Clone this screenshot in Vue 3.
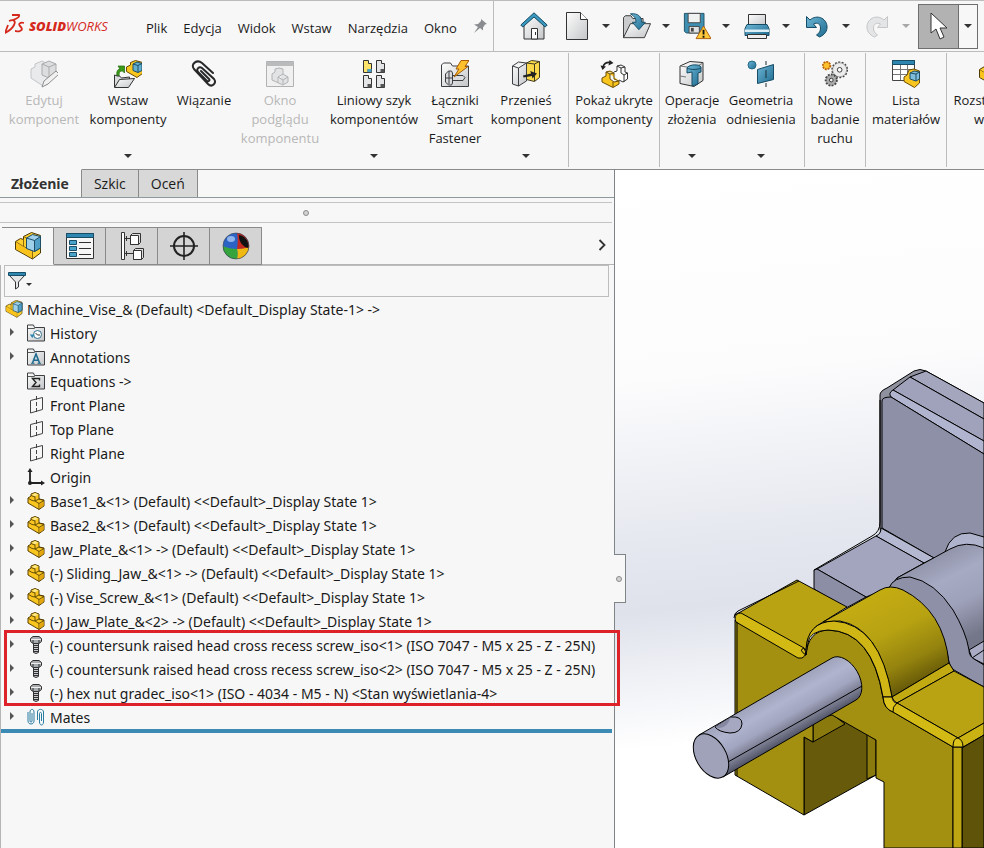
<script setup>
import { ref } from 'vue'

const menuItems = ['Plik', 'Edycja', 'Widok', 'Wstaw', 'Narzędzia', 'Okno']

const quickTools = [
  { id: 'new', label: 'Nowy' },
  { id: 'open', label: 'Otwórz' },
  { id: 'save', label: 'Zapisz' },
  { id: 'print', label: 'Drukuj' },
  { id: 'undo', label: 'Cofnij' },
  { id: 'redo', label: 'Ponów', disabled: true }
]

const ribbonGroups = [
  [
    { icon: 'edit-comp', lines: ['Edytuj', 'komponent'], size: 'lg', disabled: true },
    { icon: 'insert-comp', lines: ['Wstaw', 'komponenty'], size: 'lg', menu: true },
    { icon: 'clip', lines: ['Wiązanie'], size: 'md' },
    { icon: 'preview', lines: ['Okno', 'podglądu', 'komponentu'], size: 'lg', disabled: true },
    { icon: 'pattern', lines: ['Liniowy szyk', 'komponentów'], size: 'xl', menu: true },
    { icon: 'fastener', lines: ['Łączniki', 'Smart', 'Fastener'], size: 'sm' },
    { icon: 'move', lines: ['Przenieś', 'komponent'], size: 'lg', menu: true }
  ],
  [{ icon: 'show-hidden', lines: ['Pokaż ukryte', 'komponenty'], size: 'lg' }],
  [
    { icon: 'features', lines: ['Operacje', 'złożenia'], size: 'sm', menu: true },
    { icon: 'geometry', lines: ['Geometria', 'odniesienia'], size: 'lg', menu: true }
  ],
  [{ icon: 'motion', lines: ['Nowe', 'badanie', 'ruchu'], size: 'xs' }],
  [{ icon: 'bom', lines: ['Lista', 'materiałów'], size: 'ml' }],
  [{ icon: 'asm', lines: ['Rozstrzelony', 'widok'], size: 'lg' }]
]

const tabs = ['Złożenie', 'Szkic', 'Oceń']
const activeTab = ref('Złożenie')

const managerTabs = [
  { id: 'asm', label: 'Drzewo operacji' },
  { id: 'props', label: 'Właściwości' },
  { id: 'config', label: 'Konfiguracje' },
  { id: 'target', label: 'DimXpert' },
  { id: 'sphere', label: 'Wygląd' }
]
const activeManager = ref('asm')

const treeItems = [
  { icon: 'history', text: 'History', expand: true },
  { icon: 'annot', text: 'Annotations', expand: true },
  { icon: 'equations', text: 'Equations ->' },
  { icon: 'plane', text: 'Front Plane' },
  { icon: 'plane', text: 'Top Plane' },
  { icon: 'plane', text: 'Right Plane' },
  { icon: 'origin', text: 'Origin' },
  { icon: 'part', text: 'Base1_&<1> (Default) <<Default>_Display State 1>', expand: true },
  { icon: 'part', text: 'Base2_&<1> (Default) <<Default>_Display State 1>', expand: true },
  { icon: 'part', text: 'Jaw_Plate_&<1> -> (Default) <<Default>_Display State 1>', expand: true },
  { icon: 'part', text: '(-) Sliding_Jaw_&<1> -> (Default) <<Default>_Display State 1>', expand: true },
  { icon: 'part', text: '(-) Vise_Screw_&<1> (Default) <<Default>_Display State 1>', expand: true },
  { icon: 'part', text: '(-) Jaw_Plate_&<2> -> (Default) <<Default>_Display State 1>', expand: true }
]
const toolboxItems = [
  { icon: 'bolt', text: '(-) countersunk raised head cross recess screw_iso<1> (ISO 7047 - M5 x 25 - Z - 25N)', expand: true },
  { icon: 'bolt', text: '(-) countersunk raised head cross recess screw_iso<2> (ISO 7047 - M5 x 25 - Z - 25N)', expand: true },
  { icon: 'bolt', text: '(-) hex nut gradec_iso<1> (ISO - 4034 - M5 - N) <Stan wyświetlania-4>', expand: true }
]
const mateItems = [{ icon: 'mates', text: 'Mates', expand: true }]

const treeGroups = [
  { id: 'features', items: treeItems },
  { id: 'toolbox', items: toolboxItems, marked: true },
  { id: 'mates', items: mateItems }
]

const filterText = ref('')
</script>

<template>
  <div class="app">
    <!-- icon symbols -->
    <svg class="defs" width="0" height="0" aria-hidden="true">
      <defs>
        <linearGradient id="g-blue" x1="0" y1="0" x2="1" y2="1">
          <stop offset="0" stop-color="#6db6d6" /><stop offset="1" stop-color="#1f6c90" />
        </linearGradient>
        <linearGradient id="g-gray" x1="0" y1="0" x2="1" y2="1">
          <stop offset="0" stop-color="#fdfdfd" /><stop offset="1" stop-color="#c4c6c8" />
        </linearGradient>
        <symbol id="asm" viewBox="0 0 28 28">
          <path d="M1.500 9.500l5-3 3 1V4.500l8-4 9 3V21l-8 6L1.500 17.500z" fill="#ffd02e" stroke="#4e3a06" stroke-linejoin="round" />
          <path d="M1.500 9.500l8 5V7.500M9.500 14.500l9 4.500v8M9.500 4.500l3 1.500" fill="none" stroke="#8c6a10" />
          <path d="M2 10.500l7 4.500 9 4.500V26L2 17z" fill="#f9c31c" />
          <path d="M12.500 6l6-3.500 8 2v11.500l-6 3.500-8-3z" fill="#9fd0ea" stroke="#1e4e66" stroke-linejoin="round" />
          <path d="M20.500 8.500l6-4v11.500l-6 3.500z" fill="#4f9fc6" stroke="#1e4e66" stroke-linejoin="round" />
          <path d="M12.500 6l8 2.500" fill="none" stroke="#1e4e66" />
        </symbol>
        <symbol id="part" viewBox="0 0 18 18">
          <path d="M1 6l3-2 0-2 4-1.500L12 2v5l5 1v6l-5 3.500L1 11z" fill="#f9c51f" stroke="#5a4307" stroke-linejoin="round" />
          <path d="M4.500 3L8 4.500 11.500 2.500 8 1z" fill="#ffe681" />
          <path d="M8 4.500V9l4 2.500 5-3-5-1.500-4 2M12 11.500v6M4 3.500L8 5M1 6l4 2.500 3 .5" fill="none" stroke="#5a4307" stroke-width=".9" />
          <path d="M12.500 12l4-2.500v4.300l-4 2.700z" fill="#e5a70f" />
        </symbol>
        <symbol id="folder" viewBox="0 0 18 18">
          <path d="M.5 17V1h6l1 2.500h10V17z" fill="url(#g-gray)" stroke="#3c3f42" />
          <path d="M1 4.500h6.500l1-1" fill="none" stroke="#55585b" />
        </symbol>
        <symbol id="history" viewBox="0 0 18 18">
          <use href="#folder" />
          <circle cx="10.500" cy="10.500" r="4" fill="#fff" stroke="#2f6f8f" />
          <path d="M8.500 9l2 2h2.500" fill="none" stroke="#333" />
          <path d="M2.800 10.500h5L5.300 14z" fill="#2d87b0" />
        </symbol>
        <symbol id="annot" viewBox="0 0 18 18">
          <use href="#folder" />
          <path d="M5.500 15l3.500-9 3.500 9M6.500 12.200h5" fill="none" stroke="#1f6c90" stroke-width="1.600" />
          <path d="M4 15.300h3.500M10.500 15.300H14" stroke="#1f6c90" />
        </symbol>
        <symbol id="equations" viewBox="0 0 18 18">
          <use href="#folder" />
          <path d="M12.500 8.500V6.500h-7L9 10.500l-3.500 4h7v-2" fill="none" stroke="#222" stroke-width="1.400" />
        </symbol>
        <symbol id="plane" viewBox="0 0 18 18">
          <path d="M3.500 4.500l12-3v12l-12 3.500z" fill="none" stroke="#444" />
          <path d="M9.500 0v17.500" stroke="#444" stroke-dasharray="4 2" />
        </symbol>
        <symbol id="origin" viewBox="0 0 18 18">
          <path d="M3 2v13h13" fill="none" stroke="#222" stroke-width="1.800" />
          <path d="M.5 4L3 0l2.500 4zM14 12.500L18 15l-4 2.500z" fill="#222" />
          <circle cx="3" cy="15" r="2" fill="#222" />
        </symbol>
        <symbol id="bolt" viewBox="0 0 18 18">
          <path d="M3.500 2.500L6 .5h6l2.500 2v3l-2.500 2H6l-2.500-2z" fill="#a9acaf" stroke="#2e3032" />
          <path d="M4 3.500h10" stroke="#eee" />
          <path d="M6.500 7.500h5v9l-2.500 1-2.500-1z" fill="#c9cbcd" stroke="#2e3032" />
          <path d="M6.500 9.500h5M6.500 11.500h5M6.500 13.500h5M6.500 15.500h5M6 4v3M12 4v3" stroke="#2e3032" />
        </symbol>
        <symbol id="mates" viewBox="0 0 18 18">
          <path d="M1 4v9c0 4 6 4 6 0V4C7 .5 3 .5 3 4v9c0 1.500 2 1.500 2 0V5" fill="none" stroke="#2a7ca3" />
          <path d="M10.500 12V4c0-3.500 6-3.500 6 0v10c0 4-4 4-4 0V5.500c0-1.500 2-1.500 2 0V13" fill="none" stroke="#2a7ca3" />
        </symbol>
        <symbol id="edit-comp" viewBox="0 0 28 28">
          <g stroke="#c3c5c7" stroke-linejoin="round">
            <path d="M1 9l4-2V4l7-3 6 3v20l-5 2L1 18z" fill="#e9eaeb" />
            <path d="M12 4l7-3 7 3v11l-7 3-7-3z" fill="#dcdddf" stroke="#a9abad" />
            <path d="M12 4l7 3v11M19 7l7-3" fill="none" stroke="#a9abad" />
            <path d="M12 27l2-6L26 11l3 3-11 10z" fill="#f1f1f1" stroke="#8d8f91" />
          </g>
        </symbol>
        <symbol id="insert-comp" viewBox="0 0 28 28">
          <path d="M12.500 7l4-2V2.500l5-2 7 2v11l-5.500 4-10.500-6z" fill="#f9c51f" stroke="#6b4d05" stroke-linejoin="round" />
          <path d="M19 4l4-2 5 1.500v7l-4 2-5-2zM19 4l5 1.500v7M24 5.500l4-2" fill="#62afd2" stroke="#1e4e66" />
          <path d="M3 17c-1-6 1-8 3-8L4 6h6.500v7l-2-2c-3 0-4 2-3 6z" fill="#3c9a1a" stroke="#1e6a08" stroke-width=".7" />
          <path d="M.5 27V15l3 1h2l2 2 8-1v3" fill="#d8dadb" stroke="#333" />
          <path d="M.5 27.500l5-8 15-1-6 9z" fill="url(#g-gray)" stroke="#333" stroke-linejoin="round" />
        </symbol>
        <symbol id="clip" viewBox="0 0 28 28">
          <path d="M23 13L12 3C7-1 0 4 4 9l14 15c4 4 9-1 6-5L12 8C9 6 6 9 8 12l9 9c2 1 3-1 2-2l-8-8" fill="none" stroke="#26282a" stroke-width="2" stroke-linecap="round" />
        </symbol>
        <symbol id="preview" viewBox="0 0 28 28">
          <path d="M.5 1.500h27v25H.5z" fill="#f0f0f0" stroke="#b0b2b4" />
          <path d="M.5 2h27v4H.5z" fill="#b9bbbd" />
          <path d="M6 14l3-2v-3l4-1 4 1v5l5 3v5l-5 3-11-5zM17 14l-5 3v5M12 17l5 3v4M17 20l5-3" fill="#e2e3e4" stroke="#b0b2b4" stroke-linejoin="round" />
        </symbol>
        <symbol id="lshape" viewBox="0 0 10 13">
          <path d="M.5.500h5v3h3v9h-8z" stroke="#333" />
          <path d="M4.500 9h4v3.500h-4z" fill="#555" />
        </symbol>
        <symbol id="pattern" viewBox="0 0 28 28">
          <use href="#lshape" x="3" y="0" width="10" height="13" fill="#ffe36b" />
          <path d="M7.500 9h4v3h-4z" fill="#4aa3c8" />
          <use href="#lshape" x="16" y="0" width="10" height="13" fill="#e4e5e6" />
          <use href="#lshape" x="3" y="15" width="10" height="13" fill="#e4e5e6" />
          <use href="#lshape" x="16" y="15" width="10" height="13" fill="#e4e5e6" />
        </symbol>
        <symbol id="fastener" viewBox="0 0 28 28">
          <path d="M.5 26.500V5l2-2h7l2 3h16v20.500z" fill="url(#g-gray)" stroke="#3c3f42" />
          <path d="M4.500 14l3-3h3l1 2v10l-1 2h-3l-3-3zM12 15.500h10l2 2-2 3H12M8 11v13M5 18h7" fill="#dadbdd" stroke="#3c3f42" />
          <path d="M20 .500h8l-4 6h3L13 17l5-8h-3z" fill="#ffc02e" stroke="#a55c05" stroke-linejoin="round" />
        </symbol>
        <symbol id="move" viewBox="0 0 28 28">
          <path d="M14.500 3l5-2.500 8 1v16l-5 4-8-2z" fill="#f9d84a" stroke="#3f3a20" stroke-linejoin="round" />
          <path d="M14.500 3l8 1 5-2.500M22.500 4v17" fill="none" stroke="#3f3a20" />
          <path d="M.5 6l6-4 8 1v18l-8 5-6-2zM.5 6l6 2 8-5M6.500 8v18" fill="url(#g-gray)" stroke="#3c3f42" stroke-linejoin="round" />
          <path d="M11 15.500l8-2-.7-2.500 6.700 2.500-4.500 5-.6-2.500L11.500 17.500z" fill="#222" />
        </symbol>
        <symbol id="show-hidden" viewBox="0 0 28 28">
          <path d="M14 12l3-1V6l4-1 4 2v5l2.500 1v6l-4.500 3-4-2M17 6l4 2 4-1M21 8v5l3 2 3.500-2M24 15v7" fill="#fff" stroke="#333" stroke-linejoin="round" />
          <path d="M2 18l4-2v-4l4-1 4 2v6l5 2v3l-6 3.500L2 22zM6 12l4 2 4-1M10 14v5l4 3 5-1M13 22v5" fill="#f9c51f" stroke="#6b4d05" stroke-linejoin="round" />
          <path d="M3 7C4 3 7 2 11 2.500" fill="none" stroke="#222" stroke-width="1.600" />
          <path d="M.5 5.500L6 6.500 2.500 10zM9.500 0l4 3-5 2.500z" fill="#222" />
        </symbol>
        <symbol id="features" viewBox="0 0 28 28">
          <path d="M2 6l10-4.500 13 1v18l-9 6-14-3z" fill="url(#g-gray)" stroke="#333" stroke-linejoin="round" />
          <path d="M2 6l14 2 9-5M2 16l6 1" fill="none" stroke="#777" />
          <path d="M9 8c2-4 13-4 14-1v5l-3 1v11l-6 2V12l-5 1z" fill="url(#g-blue)" stroke="#174d66" stroke-linejoin="round" />
          <path d="M9 8c4 2 10 2 14 0" fill="none" stroke="#174d66" />
        </symbol>
        <symbol id="geometry" viewBox="0 0 28 28">
          <circle cx="5" cy="5" r="4" fill="url(#g-blue)" stroke="#236a8a" />
          <path d="M10.500 9.500l16-5v15l-16 4z" fill="url(#g-blue)" stroke="#174d66" />
          <path d="M19 1v4M19 10v8M19 23v4" stroke="#1c2c34" />
        </symbol>
        <symbol id="motion" viewBox="0 0 30 28">
          <circle cx="6" cy="5" r="4" fill="#ffc02e" stroke="#b3610a" stroke-width="2" stroke-dasharray="2 1" />
          <circle cx="20" cy="9.500" r="8" fill="#ececed" stroke="#444" stroke-width="2" stroke-dasharray="2 1.600" />
          <circle cx="20" cy="9.500" r="7.500" fill="#ececed" stroke="#888" stroke-width=".7" />
          <circle cx="20" cy="9.500" r="2.500" fill="#fff" stroke="#333" />
          <circle cx="11" cy="20.500" r="6" fill="#aaacae" stroke="#444" stroke-width="2" stroke-dasharray="2 1.400" />
          <circle cx="11" cy="20.500" r="2" fill="#eee" stroke="#333" />
        </symbol>
        <symbol id="bom" viewBox="0 0 28 28">
          <path d="M.5.500h22v20H.5z" fill="#fff" stroke="#444" />
          <path d="M.5.500h22v4H.5z" fill="#2d87b0" stroke="#174d66" />
          <path d="M1 9.500h21M1 14.500h21M8.500 5v15M15.500 5v15" stroke="#777" />
          <path d="M12 17l3-2 2-5 5-1 5.500 2v12l-5 4.500-10.500-6z" fill="#f9c51f" stroke="#6b4d05" stroke-linejoin="round" />
          <path d="M18 13l4-2 5.500 1v7l-3.500 2-6-2zM18 13l6 1v7M24 14l3.500-2" fill="#7ebddc" stroke="#1e4e66" />
        </symbol>
        <symbol id="home" viewBox="0 0 28 28">
          <path d="M4 13L14 4l10 9v14H4z" fill="url(#g-gray)" stroke="#333" />
          <path d="M11.500 16.500h6V27h-6z" fill="#fff" stroke="#333" />
          <path d="M15.500 20v3" stroke="#333" />
          <path d="M.8 13L14 .8 27.200 13l-2 2L14 5 2.800 15z" fill="#3a98bf" stroke="#174d66" stroke-linejoin="round" />
        </symbol>
        <symbol id="new" viewBox="0 0 28 28">
          <path d="M3.500.500h14l7 7v20h-21z" fill="url(#g-gray)" stroke="#333" />
          <path d="M17.500.500v7h7" fill="#fff" stroke="#333" />
        </symbol>
        <symbol id="open" viewBox="0 0 30 28">
          <path d="M.5 26.500V5l2-2h6l2 3h11v6" fill="#c9cbcd" stroke="#333" />
          <path d="M.5 26.500L8 11.500h21.500L23 26.500z" fill="url(#g-gray)" stroke="#333" stroke-linejoin="round" />
          <path d="M8 1c8-1 12 3 12 9h4l-7 8-7-8h4c0-4-2-7-6-9z" fill="url(#g-blue)" stroke="#174d66" stroke-linejoin="round" />
        </symbol>
        <symbol id="save" viewBox="0 0 30 30">
          <path d="M1.500 1.500h21v21h-19l-2-2z" fill="#3e8fb2" stroke="#1c4f66" />
          <path d="M5.500 1.500h13v10h-13z" fill="#f0f1f1" stroke="#444" />
          <path d="M6.500 15.500h11v7h-11z" fill="#e0e1e2" stroke="#444" />
          <path d="M8.500 17h3v4h-3z" fill="#444" />
          <path d="M22 15l8 13.500H14z" fill="#ffc93c" stroke="#a85a06" stroke-linejoin="round" />
          <path d="M22 19v5M22 25.500v2" stroke="#111" stroke-width="2" />
        </symbol>
        <symbol id="print" viewBox="0 0 28 28">
          <path d="M5.500 2.500h17v12h-17z" fill="url(#g-gray)" stroke="#333" />
          <path d="M4 12.500h20l2 4v7H2v-7z" fill="url(#g-blue)" stroke="#174d66" />
          <path d="M2 17.500h24V20H2z" fill="#dceef6" />
          <path d="M4.500 22.500h19v4h-19z" fill="#eee" stroke="#333" />
        </symbol>
        <symbol id="undo" viewBox="0 0 28 28">
          <path d="M3.500 4.500v11h10l-3-3.500c4-2 7 0 7 4 0 3-1 5-4 7l3 2c5-2 8-6 7.500-11C23 6 14 2 7 8z" fill="url(#g-blue)" stroke="#174d66" stroke-linejoin="round" />
        </symbol>
        <symbol id="redo" viewBox="0 0 28 28">
          <path d="M24.500 4.500v11h-10l3-3.500c-4-2-7 0-7 4 0 3 1 5 4 7l-3 2c-5-2-8-6-7.500-11C5 6 14 2 21 8z" fill="#e4e5e6" stroke="#c4c6c8" stroke-linejoin="round" />
        </symbol>
        <symbol id="props" viewBox="0 0 28 28">
          <path d="M.5 1.500h27v25H.5z" fill="#f7f7f7" stroke="#333" />
          <path d="M.5 1.500h27v4H.5z" fill="#2d87b0" stroke="#174d66" />
          <path d="M3.500 8.500h7v4h-7zM3.500 14.500h7v4h-7zM3.500 20.500h7v4h-7z" fill="#4aa3c8" stroke="#174d66" />
          <path d="M13 10.500h12M13 16.500h12M13 22.500h12" stroke="#333" />
        </symbol>
        <symbol id="config" viewBox="0 0 28 28">
          <path d="M3.500.500h3v27h-3z" fill="#fff" stroke="#333" />
          <path d="M6.500 6.500h6M6.500 21.500h9M8.500 19v5M8.500 4v5" stroke="#333" />
          <path d="M12.500 3.500l2-2h8v9l-2 2h-8zM15.500 18.500l2-2h8v9l-2 2h-8z" fill="#ddd" stroke="#333" />
          <path d="M12.500 3.500h8v9h-8zM15.500 18.500h8v9h-8z" fill="#fff" stroke="#333" />
        </symbol>
        <symbol id="target" viewBox="0 0 28 28">
          <circle cx="14" cy="14" r="10" fill="none" stroke="#222" stroke-width="2" />
          <path d="M0 14h28M14 0v28" stroke="#222" stroke-width="1.600" />
        </symbol>
        <symbol id="sphere" viewBox="0 0 28 28">
          <circle cx="14" cy="14" r="13" fill="#2b63c4" />
          <path d="M1 14a13 13 0 0 0 14 13c1-4 1-7 0-10-5 0-10-1-14-3z" fill="#35a43c" />
          <path d="M15 27a13 13 0 0 0 12-12l-12 2c1 3 1 6 0 10z" fill="#f0b912" />
          <path d="M15 1a13 13 0 0 1 12 14c-3 1-8 2-12 2 1-6 1-11 0-16z" fill="#c22a22" />
          <path d="M17 3c6 1 10 6 9.500 13-6-1-10-7-9.500-13z" fill="#111" />
          <ellipse cx="9" cy="7" rx="4" ry="3" fill="#a9c8f5" opacity=".8" />
          <circle cx="14" cy="14" r="13" fill="none" stroke="#3a3f46" stroke-opacity=".6" />
        </symbol>
      </defs>
    </svg>

    <header class="titlebar">
      <div class="brand">
        <svg class="brand-mark" viewBox="0 0 20 20" aria-hidden="true">
          <path d="M7 1l7 0c1 2-3 4-6 5M4 7c5-2 7 0 5 4-2 4-5 6-9 8l3-8M19 9c-4-1-6 1-4 3s3 4 0 5c-2 1-4 0-5 0" fill="none" stroke="#d6291e" stroke-width="1.800" />
        </svg>
        <span class="brand-name"><b>SOLID</b>WORKS</span>
      </div>
      <nav class="menu">
        <a v-for="item in menuItems" :key="item" href="#">{{ item }}</a>
        <svg class="pin" viewBox="0 0 14 14" aria-hidden="true">
          <path d="M8 0l6 5-2 .500-2 3 0 3-3-2.500L1 14l4-6L1 5.500l4-.5 3-3z" fill="#8a8c8f" />
        </svg>
      </nav>
      <div class="quick">
        <button class="tool home" aria-label="Strona główna"><svg><use href="#home" /></svg></button>
        <div class="tool-list">
          <div v-for="tool in quickTools" :key="tool.id" class="split" :class="{ disabled: tool.disabled }">
            <button class="tool" :aria-label="tool.label"><svg><use :href="'#' + tool.id" /></svg></button>
            <button class="drop" :aria-label="tool.label + ' – opcje'"><i class="caret"></i></button>
          </div>
        </div>
        <div class="select-tool">
          <button class="cursor" aria-label="Wybierz">
            <svg viewBox="0 0 18 28">
              <path d="M1 1v20l5-4 4 10 4-2-4-9h7z" fill="#fff" stroke="#333" stroke-linejoin="round" />
            </svg>
          </button>
          <button class="cursor-drop" aria-label="Wybierz – opcje"><i class="caret"></i></button>
        </div>
      </div>
    </header>

    <div class="ribbon">
      <div v-for="(group, g) in ribbonGroups" :key="g" class="group">
        <button
          v-for="cmd in group"
          :key="cmd.icon"
          class="command"
          :class="[cmd.size, { disabled: cmd.disabled }]"
        >
          <svg class="command-icon"><use :href="'#' + cmd.icon" /></svg>
          <span v-for="line in cmd.lines" :key="line" class="line">{{ line }}</span>
          <i v-if="cmd.menu" class="caret"></i>
        </button>
      </div>
    </div>

    <main class="workspace">
      <section class="panel">
        <div class="tabs">
          <button
            v-for="tab in tabs"
            :key="tab"
            class="tab"
            :class="{ active: tab === activeTab }"
            @click="activeTab = tab"
          >{{ tab }}</button>
        </div>
        <div class="splitter"><i class="dot"></i></div>
        <div class="manager">
          <button
            v-for="tab in managerTabs"
            :key="tab.id"
            class="manager-tab"
            :class="{ active: tab.id === activeManager }"
            :aria-label="tab.label"
            @click="activeManager = tab.id"
          >
            <svg><use :href="'#' + tab.id" /></svg>
          </button>
          <button class="more" aria-label="Więcej">
            <svg viewBox="0 0 8 12"><path d="M1.500 1l5 5-5 5" fill="none" stroke="#333" stroke-width="1.800" /></svg>
          </button>
        </div>
        <div class="tree-box">
          <label class="filter">
            <svg class="funnel" viewBox="0 0 18 18" aria-hidden="true">
              <path d="M1 3l6.500 7v7l3-2V10L17 3z" fill="#e4e5e6" stroke="#333" stroke-linejoin="round" />
              <path d="M.5.500h17v3H.5z" fill="#2d87b0" stroke="#174d66" />
            </svg>
            <i class="caret small"></i>
            <input v-model="filterText" type="text" aria-label="Filtr">
          </label>
          <div class="root">
            <svg class="tree-icon"><use href="#asm" /></svg>
            <span>Machine_Vise_&amp; (Default) &lt;Default_Display State-1&gt; -&gt;</span>
          </div>
          <ul v-for="group in treeGroups" :key="group.id" class="tree" :class="{ marked: group.marked }">
            <li v-for="item in group.items" :key="item.text" class="node">
              <button v-if="item.expand" class="expander" aria-label="Rozwiń"></button>
              <span v-else class="no-expander"></span>
              <svg class="tree-icon"><use :href="'#' + item.icon" /></svg>
              <span>{{ item.text }}</span>
            </li>
          </ul>
          <div class="rollback"></div>
        </div>
      </section>

      <section class="viewport">
        <svg class="scene" viewBox="615 170 369 678" preserveAspectRatio="xMinYMin slice">
          <defs>
            <linearGradient id="bg" gradientUnits="userSpaceOnUse" x1="680" y1="170" x2="750" y2="848">
              <stop offset="0" stop-color="#fff" />
              <stop offset=".3" stop-color="#fcfcfd" />
              <stop offset=".42" stop-color="#f1f2f6" />
              <stop offset=".54" stop-color="#e5e8ef" />
              <stop offset=".64" stop-color="#dfe2eb" />
              <stop offset=".73" stop-color="#eef0f5" />
              <stop offset=".84" stop-color="#fff" />
            </linearGradient>
            <linearGradient id="shaft" gradientUnits="userSpaceOnUse" x1="765" y1="696" x2="789" y2="738">
              <stop offset="0" stop-color="#9ea2ba" />
              <stop offset=".3" stop-color="#b0b4ce" />
              <stop offset=".6" stop-color="#a2a5bf" />
              <stop offset=".85" stop-color="#77798d" />
              <stop offset="1" stop-color="#55576a" />
            </linearGradient>
            <linearGradient id="arch" gradientUnits="userSpaceOnUse" x1="862" y1="602" x2="905" y2="690">
              <stop offset="0" stop-color="#c3ab12" />
              <stop offset=".4" stop-color="#b7a212" />
              <stop offset=".75" stop-color="#94830e" />
              <stop offset="1" stop-color="#665908" />
            </linearGradient>
            <linearGradient id="drum" gradientUnits="userSpaceOnUse" x1="925" y1="560" x2="965" y2="640">
              <stop offset="0" stop-color="#9093a8" />
              <stop offset=".3" stop-color="#a6aac3" />
              <stop offset=".6" stop-color="#9ea1ba" />
              <stop offset="1" stop-color="#747689" />
            </linearGradient>
          </defs>
          <path d="M615 170h369v678H615z" fill="url(#bg)" />

          <!-- fixed jaw -->
          <g stroke="#000" stroke-linejoin="round">
            <path d="M880 395Q880 391 887 388L914 371Q920 368 926 371L984 403V540H882L880 528z" fill="#8f919f" />
            <path d="M910 377L926 371L984 403V419z" fill="#a3a6bd" />
            <path d="M893 390L910 377L984 419V441z" fill="#9fa2ba" />
            <path d="M891 397Q888 393 893 390L984 441V454z" fill="#b1b4ce" />
            <path d="M882 401Q882 397 891 397L984 454V590L934 558L882 528z" fill="#8e90a7" />
            <path d="M881 528L934 558L924 563L876 536Q881 534 881 528z" fill="#b4b8d0" />
            <path d="M817 569L876 536L924 563L897 578L889 588L866 597z" fill="#a2a5bd" />
            <path d="M814 570L817 569L866 597L846 608L814 589z" fill="#8c8ea6" />
            <path d="M814 570L872 536Q880 532 880 522V400" fill="none" />
          </g>

          <!-- drum and collar -->
          <g stroke="#000" stroke-linejoin="round">
            <path d="M945 552Q951 532 970 533L984 537V560H945z" fill="#b0b3cc" />
            <path d="M897 578L950 549Q966 540 984 548V665H960L900 590z" fill="url(#drum)" />
            <path d="M969 650L984 641V664L972 658z" fill="#a9acc4" />
            <path d="M972 658L984 650" fill="none" />
            <path d="M889 588Q893 577 910 577Q935 582 953 610Q966 632 969 650Q969 656 974 659L984 665V687L954 670Q949 666 948 657Q943 628 927 610Q908 588 889 588z" fill="#8e90a8" />
          </g>

          <!-- sliding body -->
          <g stroke="#000" stroke-linejoin="round">
            <path d="M804 737L813 742V718L840 712L876 740V775L804 815z" fill="#675a0b" />
            <path d="M813 720L832 714L845 724L813 742z" fill="#8a7a0e" />
            <path d="M867 734L876 740V775L867 779z" fill="#8a7a0e" />
            <path d="M735 620L798 656L806 655Q808 631 828 630Q872 631 883 698Q884 709 893 712L953 747V848H884V782L876 778V740L832 715L813 720V742L804 737V815L735 775z" fill="#a39010" />
            <path d="M735 615L797 580L847 607L823 622Q807 629 806 650L738 613z" fill="#b9a313" />
            <path d="M734 618Q734 613 738 611L799 581" fill="none" />
            <path d="M735 619Q735 613 741 613L804 648Q808 655 802 658L798 658L736 622z" fill="#d2b914" />
            <path d="M806 655Q798 650 804 648M737 776V622" fill="none" />
            <path d="M823 622L880 590Q890 584 903 590Q944 611 949 663L892 697Q880 628 840 621z" fill="url(#arch)" />
            <path d="M806 650Q807 622 834 621Q880 624 892 697L883 697Q872 631 828 630Q809 631 808 643L806 655z" fill="#cfb614" />
            <path d="M892 697L949 663L954 671L897 703Q893 701 892 697z" fill="#c2aa12" />
            <path d="M883 697H892Q893 703 897 703L893 712Q884 709 883 697z" fill="#dcc31c" />
            <path d="M897 703L954 671L984 687V723L958 738z" fill="#b9a313" />
            <path d="M897 703L958 738L953 747L893 712Q892 707 897 703z" fill="#d2b914" />
            <path d="M958 738L984 723V735L963 747z" fill="#cbb213" />
            <path d="M962 748L984 735V848H962z" fill="#5f530a" />
            <path d="M953 747H962V848H953z" fill="#bda612" />
            <path d="M953 747Q953 738 958 738Q963 740 963 747z" fill="#dcc31c" />
          </g>

          <!-- screw shaft -->
          <g stroke="#000" stroke-linejoin="round">
            <path d="M699 735L832 658A15 24 -30 0 1 856 700L723 777z" fill="url(#shaft)" />
            <path d="M728 762L862 686" />
            <ellipse cx="711" cy="756" rx="15" ry="24" transform="rotate(-30 711 756)" fill="#9fa2b8" />
            <path d="M715 727L731 717Q742 716 742 724Q741 733 730 733Q719 732 715 727z" fill="#a5a8c0" />
            <path d="M715 727Q726 731 731 717L715 727z" fill="#8588a0" stroke="none" />
          </g>
        </svg>
        <button class="handle" aria-label="Zwiń panel"><i class="dot"></i></button>
      </section>
    </main>
  </div>
</template>

<style>
body {
  margin: 0;
  overflow: hidden;
}
</style>

<style scoped>
.app {
  display: flex;
  flex-direction: column;
  height: 100vh;
  background: #f7f7f7;
  color: #1a1a1a;
  font-family: "Open Sans", "Noto Sans", sans-serif;
  font-size: 13px;
  overflow: hidden;
}

.defs {
  position: absolute;
}

button {
  margin: 0;
  padding: 0;
  border: none;
  background: none;
  color: inherit;
  font: inherit;
  cursor: pointer;
}

.caret {
  display: block;
  border: 4px solid transparent;
  border-top-color: #333;
  border-bottom: none;
}

.caret.small {
  border-width: 3px;
  border-bottom: none;
}

.dot {
  display: block;
  box-sizing: border-box;
  width: 6px;
  height: 6px;
  border: 1px solid #8a8c8e;
  border-radius: 50%;
  background: #d2d2d2;
}

/* title bar */
.titlebar {
  display: flex;
  flex: none;
  box-sizing: border-box;
  height: 52px;
  border-top: 1px solid #bcbcbc;
  border-bottom: 1px solid #bcbcbc;
}

.brand {
  display: flex;
  align-items: center;
  gap: 4px;
  width: 141px;
  padding-left: 5px;
  color: #d6291e;
}

.brand-mark {
  width: 20px;
  height: 20px;
  margin-bottom: 4px;
}

.brand-name {
  font-size: 13px;
  font-style: italic;
}

.brand-name b {
  font-weight: 800;
}

.menu {
  display: flex;
  align-items: center;
  gap: 16px;
  width: 347px;
  padding-top: 3px;
}

.menu a {
  color: #1a1a1a;
  text-decoration: none;
}

.pin {
  flex: none;
  width: 14px;
  height: 14px;
  margin-bottom: 4px;
}

.quick {
  display: flex;
  flex: 1;
  align-items: center;
  padding-left: 23px;
  border-left: 1px solid #bcbcbc;
}

.tool {
  display: flex;
  align-items: center;
  justify-content: center;
  width: 34px;
  height: 34px;
}

.tool svg {
  width: 28px;
  height: 28px;
}

.home {
  margin-right: 9px;
}

.tool-list {
  display: flex;
  gap: 2px;
}

.split {
  display: flex;
}

.drop {
  display: flex;
  align-items: center;
  justify-content: center;
  width: 24px;
}

.split.disabled .caret {
  border-top-color: #a8a8a8;
}

.select-tool {
  display: flex;
  box-sizing: border-box;
  height: 45px;
  border: 1px solid #6e6e6e;
}

.cursor {
  display: flex;
  align-items: center;
  justify-content: center;
  width: 40px;
  border-right: 1px solid #6e6e6e;
  background: #b2b2b2;
}

.cursor svg {
  width: 18px;
  height: 28px;
}

.cursor-drop {
  display: flex;
  align-items: center;
  justify-content: center;
  width: 18px;
}

/* ribbon */
.ribbon {
  display: flex;
  flex: none;
  box-sizing: border-box;
  height: 117px;
  overflow: hidden;
}

.group {
  display: flex;
  flex: none;
  height: 114px;
  margin-top: 1px;
  padding: 0 3px;
  border-right: 1px solid #bcbcbc;
}

.group:first-child {
  padding: 0 0 0 2px;
}

.command {
  position: relative;
  display: flex;
  flex-direction: column;
  align-items: center;
  padding-top: 7px;
  line-height: 19px;
  white-space: nowrap;
}

.command.xs { width: 54px; }
.command.sm { width: 58px; }
.command.md { width: 68px; }
.command.ml { width: 74px; }
.command.lg { width: 84px; }
.command.xl { width: 104px; }

.command.sm + .command.lg {
  width: 80px;
}

.group:first-child .command.sm + .command.lg {
  width: 84px;
}

.command.disabled {
  color: #b8b8b8;
}

.command-icon {
  width: 28px;
  height: 28px;
  margin-bottom: 3px;
}

.command .caret {
  position: absolute;
  bottom: 9px;
}

/* workspace */
.workspace {
  display: flex;
  flex: 1;
  min-height: 0;
}

.panel {
  display: flex;
  flex-direction: column;
  box-sizing: border-box;
  width: 62.5%;
  border-right: 1px solid #7f8587;
  font-size: 14px;
}

.tabs {
  display: flex;
  flex: none;
  box-sizing: border-box;
  height: 29px;
  border-bottom: 1px solid #8d999c;
}

.tabs::after {
  content: "";
  flex: 1;
  border-top: 1px solid #8a8a8a;
}

.tab {
  padding: 0 12px;
  border-top: 1px solid #8a8a8a;
  border-right: 1px solid #8a8a8a;
  background: #d8d8d8;
}

.tab.active {
  padding-left: 11px;
  border-top-color: transparent;
  background: #f7f7f7;
  font-weight: bold;
  color: #333;
}

.splitter {
  display: flex;
  align-items: center;
  justify-content: center;
  height: 19px;
  margin: 4px 2px 4px 0;
  border-top: 1px solid #c4c4c4;
  border-bottom: 1px solid #c4c4c4;
}

.manager {
  display: flex;
  flex: none;
  height: 38px;
  padding-left: 2px;
}

.manager-tab {
  display: flex;
  align-items: center;
  justify-content: center;
  box-sizing: border-box;
  width: 52px;
  border: 1px solid #8a8a8a;
  border-left: none;
  background: #d4d4d4;
}

.manager-tab.active {
  border-bottom-color: transparent;
  background: #f7f7f7;
}

.manager-tab svg {
  width: 28px;
  height: 28px;
}

.more {
  flex: 1;
  padding-right: 8px;
  border-bottom: 1px solid #b5b5b5;
  text-align: right;
}

.more svg {
  width: 8px;
  height: 12px;
}

.tree-box {
  flex: 1;
  border-left: 1px solid #b5b5b5;
  font-family: "Noto Sans", "Open Sans", sans-serif;
}

.filter {
  display: flex;
  align-items: center;
  box-sizing: border-box;
  height: 32px;
  margin: 0 5px 0 3px;
  padding-left: 3px;
  border: 1px solid #bdbdbd;
}

.funnel {
  width: 18px;
  height: 18px;
}

.filter .caret {
  margin-top: 6px;
}

.filter input {
  flex: 1;
  border: none;
  outline: none;
  background: none;
  font: inherit;
}

.root,
.node {
  display: flex;
  align-items: center;
  height: 24px;
  white-space: nowrap;
}

.root {
  gap: 4px;
  padding-left: 4px;
}

.tree {
  margin: 0;
  padding: 0;
  list-style: none;
}

.marked {
  position: relative;
}

.marked::after {
  content: "";
  position: absolute;
  inset: -3px -6px -1px 3px;
  z-index: 2;
  border: 3px solid #dd2229;
  pointer-events: none;
}

.expander,
.no-expander {
  width: 26px;
  height: 24px;
}

.expander::before {
  content: "";
  display: block;
  width: 0;
  margin: 0 0 2px 9px;
  border: 4px solid transparent;
  border-left-color: #555;
  border-right: none;
}

.tree-icon {
  flex: none;
  width: 18px;
  height: 18px;
}

.node .tree-icon {
  margin-right: 5px;
}

.rollback {
  height: 4px;
  margin-right: 2px;
  background: #3b8bb5;
}

.viewport {
  position: relative;
  flex: 1;
  min-width: 0;
  border-top: 1px solid #8a8a8a;
}

.scene {
  display: block;
  width: 100%;
  height: 100%;
}

.handle {
  position: absolute;
  top: 384px;
  left: -1px;
  display: flex;
  align-items: center;
  box-sizing: border-box;
  width: 12px;
  height: 49px;
  padding-left: 2px;
  border: 1px solid #7f8587;
  border-left: none;
  background: #f7f7f7;
}
</style>
